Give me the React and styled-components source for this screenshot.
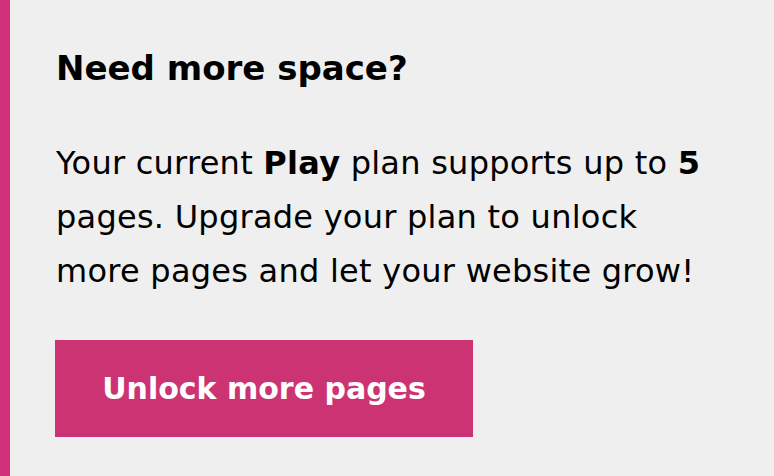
import React from 'react'
import styled, { createGlobalStyle } from 'styled-components'

const GlobalStyle = createGlobalStyle`
  html, body {
    margin: 0;
    padding: 0;
    background: #efefef;
  }
  body {
    font-family: 'DejaVu Sans', 'Liberation Sans', sans-serif;
    color: #000;
  }
`

const Card = styled.section`
  box-sizing: border-box;
  width: 774px;
  height: 476px;
  background: #efefef;
  border-left: 10px solid #d1307a;
  padding: 43px 10px 0 45px;
  display: flex;
  flex-direction: column;
  align-items: flex-start;
`

const Heading = styled.h2`
  margin: 0 0 0 1px;
  font-size: 34px;
  line-height: 50px;
  font-weight: 700;
  white-space: nowrap;
`

const Text = styled.p`
  margin: 43px 0 0 1px;
  font-size: 32px;
  line-height: 54px;
  font-weight: 400;
  letter-spacing: 0.25px;
  white-space: nowrap;

  b {
    font-weight: 700;
  }
`

const Button = styled.button`
  margin-top: 42px;
  width: 418px;
  height: 97px;
  padding: 0;
  border: none;
  background: #cc3373;
  color: #fff;
  font-family: inherit;
  font-size: 30px;
  font-weight: 700;
  cursor: pointer;
`

const App = () => {
  return (
    <>
      <GlobalStyle />
      <Card>
        <Heading>Need more space?</Heading>
        <Text>
          Your current <b>Play</b> plan supports up to <b>5</b>
          <br />
          pages. Upgrade your plan to unlock
          <br />
          more pages and let your website grow!
        </Text>
        <Button>Unlock more pages</Button>
      </Card>
    </>
  )
}

export default App
